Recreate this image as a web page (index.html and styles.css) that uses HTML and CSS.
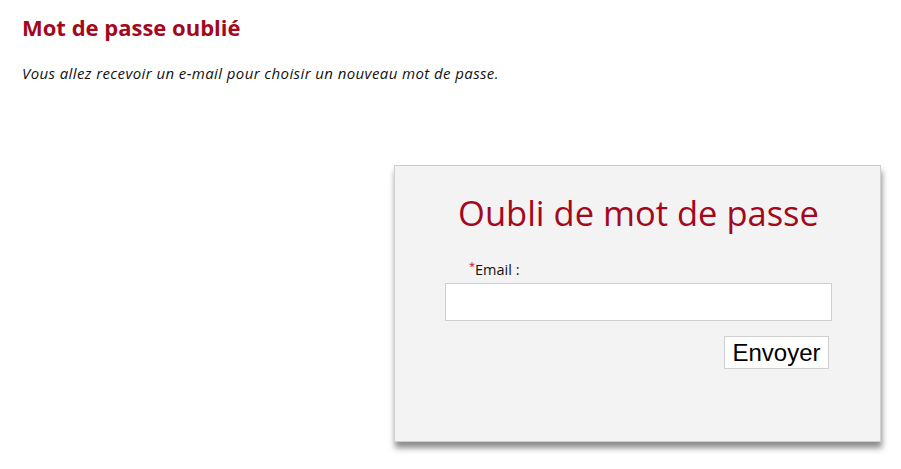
FILE: index.html
```html
<!DOCTYPE html>
<html lang="fr">
<head>
  <meta charset="UTF-8" />
  <title>Mot de passe oublié</title>
  <link rel="stylesheet" href="styles.css">
</head>
<body>
  <div class="page">
    <h1 class="page-title">Mot de passe oublié</h1>
    <p class="intro">Vous allez recevoir un e-mail pour choisir un nouveau mot de passe.</p>

    <div class="card-row">
      <form class="card" id="forgot-form">
        <h2 class="card-title">Oubli de mot de passe</h2>
        <div class="field">
          <label for="email"><span class="req">*</span>Email :</label>
          <input type="email" id="email" autocomplete="email">
        </div>
        <div class="actions">
          <button type="submit">Envoyer</button>
        </div>
      </form>
    </div>
  </div>
</body>
</html>
```

FILE: styles.css
```css
:root {
  --brand: #a3081c;
  --border: #cfcfcf;
  --panel: #f3f3f3;
}

* {
  box-sizing: border-box;
  margin: 0;
  padding: 0;
}

html, body {
  min-height: 100%;
}

body {
  background: #ffffff;
  font-family: 'Open Sans', 'Lato', sans-serif;
  color: #111111;
}

.page {
  padding: 12px 20px 30px 22px;
}

.page-title {
  font-size: 22px;
  font-weight: 700;
  color: var(--brand);
  line-height: 30px;
}

.intro {
  margin-top: 21px;
  font-size: 15px;
  font-style: italic;
  letter-spacing: 0.4px;
  line-height: 20px;
}

.card-row {
  display: flex;
  justify-content: flex-end;
  margin-top: 82px;
}

.card {
  width: 487px;
  height: 277px;
  background: var(--panel);
  border: 1px solid var(--border);
  box-shadow: 1px 6px 6px rgba(0, 0, 0, 0.45);
  padding: 26px 48px 0 50px;
}

.card-title {
  font-size: 34.5px;
  font-weight: 400;
  color: var(--brand);
  text-align: center;
  line-height: 42px;
}

.field {
  margin-top: 24px;
}

label {
  display: block;
  font-size: 14.5px;
  line-height: 16px;
  padding-left: 24px;
  margin-bottom: 5px;
}

.req {
  color: #d0021b;
  font-size: 11px;
  vertical-align: 5px;
}

input {
  display: block;
  width: 387px;
  height: 38px;
  border: 1px solid var(--border);
  background: #ffffff;
  font-size: 14px;
  padding: 0 8px;
  outline: none;
}

.actions {
  display: flex;
  justify-content: flex-end;
  margin-top: 15px;
  padding-right: 3px;
}

button {
  width: 105px;
  height: 33px;
  background: #ffffff;
  border: 1px solid var(--border);
  font-family: 'Liberation Sans', Arial, sans-serif;
  font-size: 24px;
  line-height: 1;
  color: #000000;
  cursor: pointer;
}
```
